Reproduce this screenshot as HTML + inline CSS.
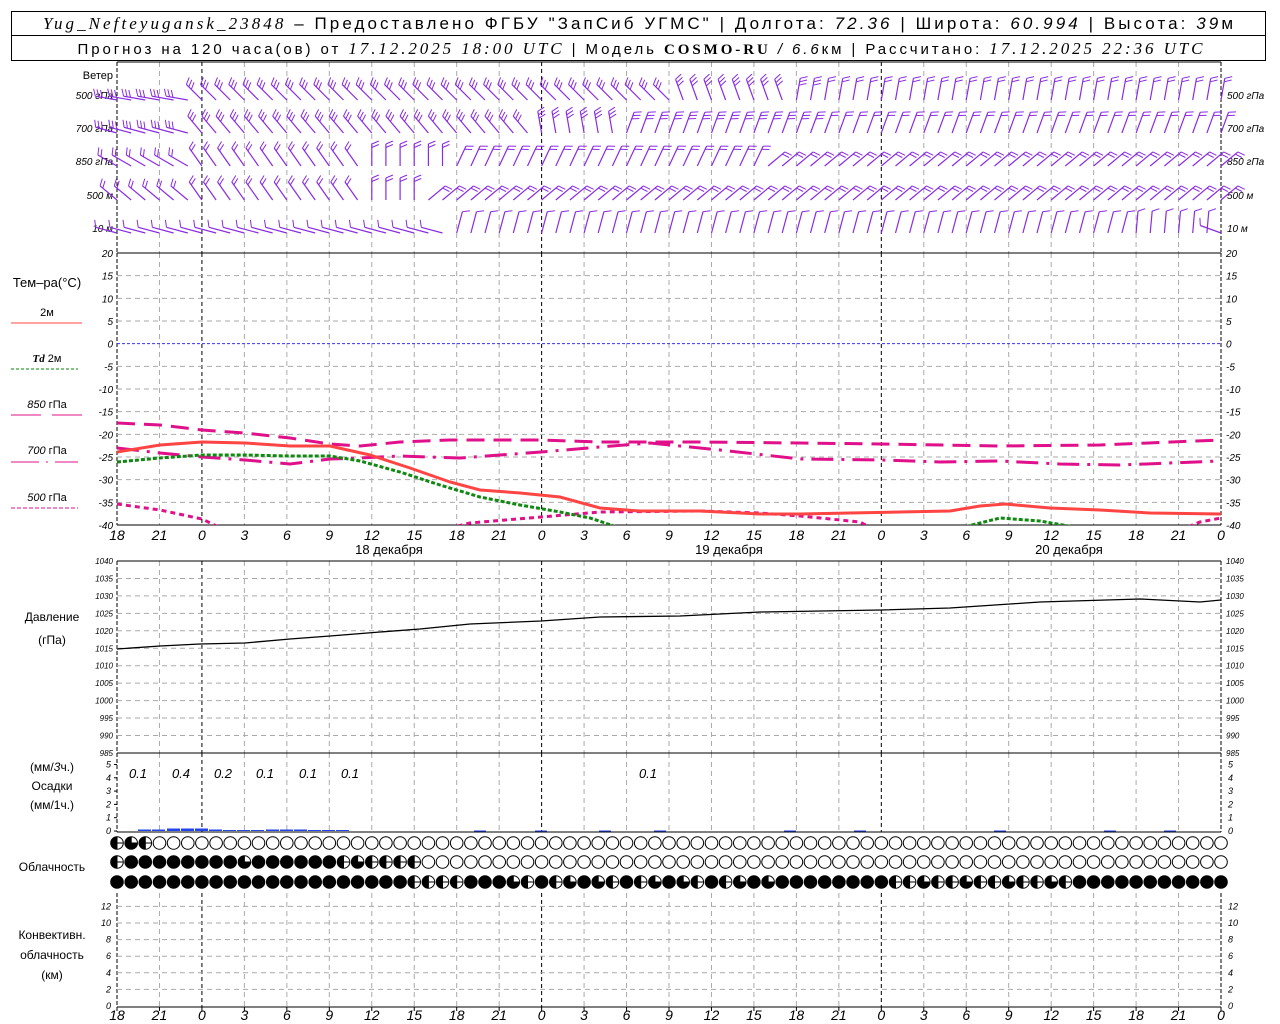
<!DOCTYPE html>
<html><head><meta charset="utf-8"><style>
body{margin:0;background:#fff;width:1280px;height:1024px;overflow:hidden}
svg{display:block}
text{font-family:"Liberation Sans","DejaVu Sans",sans-serif;fill:#000}
.it{font-style:italic}
</style></head><body>
<svg id="s" width="1280" height="1024" xmlns="http://www.w3.org/2000/svg">
<rect x="11.5" y="11.5" width="1254" height="24" fill="none" stroke="#000"/>
<rect x="11.5" y="35.5" width="1254" height="25" fill="none" stroke="#000"/>
<text x="638" y="29" font-size="17" text-anchor="middle" textLength="1190"><tspan class="it" font-family="Liberation Serif">Yug_Nefteyugansk_23848</tspan> – Предоставлено ФГБУ "ЗапСиб УГМС" | Долгота: <tspan class="it">72.36</tspan> | Широта: <tspan class="it">60.994</tspan> | Высота: <tspan class="it">39</tspan>м</text>
<text x="640" y="54" font-size="15" text-anchor="middle" textLength="1125">Прогноз на 120 часа(ов) от <tspan class="it" font-family="Liberation Serif" font-size="17">17.12.2025 18:00 UTC</tspan> | Модель <tspan font-weight="bold" font-family="Liberation Serif">COSMO-RU</tspan> <tspan class="it">/ 6.6</tspan>км | Рассчитано: <tspan class="it" font-family="Liberation Serif" font-size="17">17.12.2025 22:36 UTC</tspan></text>
<g id="g"></g>
</svg>
<script>
var g=document.getElementById('g'),h='';
function X(t){return 117+t*14.154}
var L=117,R=1221;
function line(x1,y1,x2,y2,st){h+='<line x1="'+x1+'" y1="'+y1+'" x2="'+x2+'" y2="'+y2+'" '+st+'/>';}
function txt(x,y,s,sz,anc,cls){h+='<text x="'+x+'" y="'+y+'" font-size="'+sz+'" text-anchor="'+(anc||'start')+'"'+(cls?' class="'+cls+'"':'')+'>'+s+'</text>';}
var panels=[[62,253],[253,525],[561,753],[753,832],[893,1007]];
panels.forEach(function(p){
 for(var k=1;k<26;k++){var x=X(k*3);var day=(k%8==2);
  line(x,p[0],x,p[1],day?'stroke="#000" stroke-dasharray="4,3"':'stroke="#aaa" stroke-dasharray="5,4"');}
 line(L,p[0],L,p[1],'stroke="#000" stroke-dasharray="4,2"');
 line(R,p[0],R,p[1],'stroke="#000" stroke-dasharray="4,2"');
});
line(L,62,R,62,'stroke="#000"');line(L,253,R,253,'stroke="#000"');line(L,525,R,525,'stroke="#000"');
line(L,561,R,561,'stroke="#000"');line(L,753,R,753,'stroke="#000"');line(L,832,R,832,'stroke="#000"');
line(L,1007,R,1007,'stroke="#000"');
for(var T=20;T>=-40;T-=5){var y=253+(20-T)*4.533;
 if(T<20&&T>-40) line(L,y,R,y,T==0?'stroke="#33f" stroke-dasharray="3,2"':'stroke="#aaa" stroke-dasharray="5,4"');
 txt(113,y+4,T,10,'end','it');txt(1226,y+4,T,10,'start','it');}
for(var P=1040;P>=985;P-=5){var y=561+(1040-P)*3.49;
 if(P<1040&&P>985) line(L,y,R,y,'stroke="#aaa" stroke-dasharray="5,4"');
 txt(113,y+3,P,8,'end','it');txt(1226,y+3,P,8,'start','it');}
for(var m=0;m<=5;m++){var y=831-m*13.3;txt(111,y+3,m,9,'end','it');txt(1228,y+3,m,9,'start','it');line(L-3,y,L,y,'stroke="#000"');}
for(var c=0;c<=12;c+=2){var y=1006-c*8.3;if(c>0)line(L,y,R,y,'stroke="#aaa" stroke-dasharray="5,4"');
 txt(111,y+3,c,9,'end','it');txt(1228,y+3,c,9,'start','it');}
for(var k=0;k<=26;k++){var v=(18+k*3)%24;var x=X(k*3);txt(x,540,v,14,'middle','it');txt(x,1020,v,14,'middle','it');line(x,1007,x,1011,'stroke="#000"');}
txt(389,554,'18 декабря',13,'middle');txt(729,554,'19 декабря',13,'middle');txt(1069,554,'20 декабря',13,'middle');
txt(113,79,'Ветер',11,'end');
var wl=[[95,'500 гПа'],[128,'700 гПа'],[161,'850 гПа'],[195,'500 м'],[228,'10  м']];
wl.forEach(function(w){txt(113,w[0]+4,w[1],10,'end','it');txt(1227,w[0]+4,w[1],10,'start','it');});
txt(47,287,'Тем–ра(°C)',13,'middle');
txt(47,316,'2м',11,'middle');line(11,323,82,323,'stroke="#f44" stroke-width="1"');
txt(47,362,'<tspan class="it" font-weight="bold" font-family="Liberation Serif">Td</tspan>  2м',11,'middle');line(11,369,78,369,'stroke="#080" stroke-dasharray="3,2"');
txt(47,408,'<tspan class="it">850</tspan> гПа',11,'middle');line(11,415,41,415,'stroke="#e0108a"');line(52,415,82,415,'stroke="#e0108a"');
txt(47,454,'<tspan class="it">700</tspan> гПа',11,'middle');line(11,462,78,462,'stroke="#e0108a" stroke-dasharray="28,7,2,7"');
txt(47,501,'<tspan class="it">500</tspan> гПа',11,'middle');line(11,508,78,508,'stroke="#e0108a" stroke-dasharray="4,2"');
txt(52,621,'Давление',12,'middle');txt(52,644,'(гПа)',12,'middle');
txt(52,771,'(мм/<tspan class="it">3</tspan>ч.)',12,'middle');txt(52,790,'Осадки',12,'middle');txt(52,809,'(мм/1ч.)',12,'middle');
txt(52,871,'Облачность',12,'middle');
txt(52,939,'Конвективн.',12,'middle');txt(52,959,'облачность',12,'middle');txt(52,979,'(км)',12,'middle');
[[138,'0.1'],[181,'0.4'],[223,'0.2'],[265,'0.1'],[308,'0.1'],[350,'0.1'],[648,'0.1']].forEach(function(p){txt(p[0],778,p[1],13,'middle','it');});
var pb=[[145,1.5],[159,1.5],[174,2.5],[188,2.5],[202,2.5],[216,1.5],[230,1],[244,1],[258,1],[273,1.5],[287,1.5],[301,1.5],[315,1],[329,1],[343,1]];
pb.forEach(function(b){h+='<rect x="'+(b[0]-7)+'" y="'+(831-b[1])+'" width="13" height="'+b[1]+'" fill="#2244ee"/>';});
[480,541,605,660,790,860,1000,1110,1170].forEach(function(x){line(x-6,831,x+6,831,'stroke="#2244ee"');});
function poly(pts,st){h+='<polyline fill="none" points="'+pts.map(function(p){return p.join(',')}).join(' ')+'" '+st+'/>';}
var clip='clip-path="url(#ct)"';
h+='<defs><clipPath id="ct"><rect x="117" y="253" width="1104" height="272"/></clipPath></defs>';
poly([[117,423],[160,425],[202,430],[245,433],[290,438],[330,444],[360,446],[400,442],[450,440],[541,440],[600,442],[700,442],[800,443],[881,444],[1000,446],[1100,445],[1221,440]],'stroke="#e0108a" stroke-width="3" stroke-dasharray="18,9" '+clip);
poly([[117,448],[160,453],[202,457],[245,460],[290,464],[330,459],[360,458],[400,456],[460,458],[541,452],[600,447],[650,443],[720,450],[800,459],[881,460],[940,462],[1000,461],[1060,464],[1120,465],[1221,461]],'stroke="#e0108a" stroke-width="3" stroke-dasharray="22,8,3,8" '+clip);
poly([[117,504],[160,510],[202,519],[225,530]],'stroke="#e0108a" stroke-width="3" stroke-dasharray="5,4" '+clip);
poly([[440,530],[470,523],[541,517],[600,512],[700,511],[760,513],[800,516],[860,522],[875,530]],'stroke="#e0108a" stroke-width="3" stroke-dasharray="5,4" '+clip);
poly([[1180,530],[1200,522],[1221,518]],'stroke="#e0108a" stroke-width="3" stroke-dasharray="5,4" '+clip);
poly([[117,462],[160,458],[202,455],[245,455],[290,456],[330,456],[360,461],[400,472],[440,485],[480,497],[520,505],[560,512],[590,518],[620,528]],'stroke="#118811" stroke-width="3" stroke-dasharray="4,2" '+clip);
poly([[960,528],[1000,518],[1040,521],[1080,528]],'stroke="#118811" stroke-width="3" stroke-dasharray="4,2" '+clip);
poly([[117,452],[160,445],[202,442],[245,443],[290,446],[330,446],[370,455],[410,468],[450,482],[480,490],[520,493],[560,497],[600,508],[640,511],[700,511],[760,514],[800,514],[850,513],[900,512],[950,511],[980,506],[1005,504],[1050,508],[1100,510],[1150,513],[1221,514]],'stroke="#f44" stroke-width="3" '+clip);
poly([[117,649],[160,646],[200,644],[245,643],[290,639],[330,636],[380,632],[420,629],[470,624],[541,621],[600,617],[680,616],[760,612],[881,610],[950,608],[1010,604],[1040,602],[1140,599],[1200,602],[1221,600]],'stroke="#000" stroke-width="1.3"');
function ang(r,t){
 var a;
 if(r==0){a=t<6?-80:(t<40?-45:(t<48?-20:10));}
 else if(r==1){a=t<6?-75:(t<30?-40:(t<36?-10:20));}
 else if(r==2){a=t<6?-60:(t<18?-35:(t<24?0:(t<46?25:50)));}
 else if(r==3){a=t<6?-50:(t<18?-35:(t<22?0:(t<48?50:50)));}
 else {a=t<24?-75:(t<72?15:(t<78?5:-70));}
 return a;}
var rows=[100,133,166,200,233];
for(var r=0;r<5;r++){for(var t=0;t<=78;t++){
 var a=ang(r,t)*Math.PI/180,x0=X(t),y0=rows[r],Lh=22;
 var dx=Math.sin(a),dy=-Math.cos(a);
 var x1=x0+dx*Lh,y1=y0+dy*Lh;
 line(x0.toFixed(1),y0,x1.toFixed(1),y1.toFixed(1),'stroke="#8a2be2" stroke-width="1.2"');
 var nb=(r<2&&t<50)?3:(r==4?1:2);
 for(var b=0;b<nb;b++){var bx=x0+dx*(Lh-b*3.5),by=y0+dy*(Lh-b*3.5);
  var px=-dy*7+dx*3,py=dx*7+dy*3;
  line(bx.toFixed(1),by.toFixed(1),(bx+px).toFixed(1),(by+py).toFixed(1),'stroke="#8a2be2" stroke-width="1"');}
}}
function circ(x,y,type){
 var rr=6.3;
 if(type==0){h+='<circle cx="'+x+'" cy="'+y+'" r="'+rr+'" fill="#fff" stroke="#000"/>';}
 else if(type==4){h+='<circle cx="'+x+'" cy="'+y+'" r="'+rr+'" fill="#000" stroke="#000"/>';}
 else {h+='<circle cx="'+x+'" cy="'+y+'" r="'+rr+'" fill="#fff" stroke="#000"/>';
  h+='<path d="M'+x+' '+(y-rr)+'A'+rr+' '+rr+' 0 0 0 '+x+' '+(y+rr)+'Z" fill="#000"/>';
  if(type>=3)h+='<path d="M'+x+' '+y+'L'+(x+rr)+' '+y+'A'+rr+' '+rr+' 0 0 1 '+x+' '+(y+rr)+'Z" fill="#000"/>';
  line(x,y-rr,x,y+rr,'stroke="#000"');line(x,y,x+rr,y,'stroke="#000"');}
}
for(var i=0;i<=78;i++){var x=Math.round(X(i)*10)/10;
 circ(x,843,i==0?2:(i==1?3:(i==2?2:0)));
 circ(x,862,i==0?2:(i<16?(i==9?3:4):(i==16?2:(i==17?3:(i<22?2:0)))));
 var b=4;
 if(i>=21&&i<=24)b=2;if(i>=28&&i<=46&&i%3!=0)b=(i%2?2:3);if(i>=55&&i<=67)b=(i%3==0?3:2);
 circ(x,882,b);
}
g.innerHTML=h;
</script>
</body></html>
